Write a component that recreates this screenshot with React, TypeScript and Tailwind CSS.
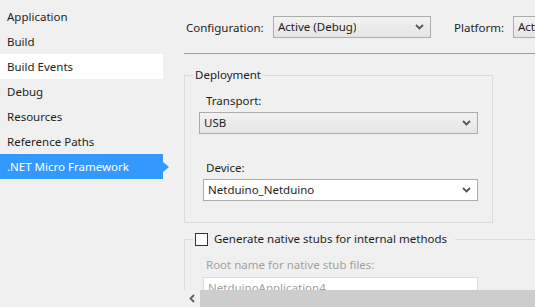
const Chevron = () => {
  return (
    <svg width="9" height="6" viewBox="0 0 9 6" className="shrink-0">
      <path d="M1 1l3.5 3.5L8 1" fill="none" stroke="#555" strokeWidth="1.8" />
    </svg>
  );
};

function DropDown({
  value,
  className,
  white,
}: {
  value: string;
  className: string;
  white?: boolean;
}) {
  return (
    <div
      className={`flex h-[22px] items-center justify-between border border-[#acacac] pl-[4px] pr-[6px] ${white ? "bg-white" : "bg-gradient-to-b from-[#f2f2f2] to-[#e5e5e5]"} ${className}`}
    >
      <span className="truncate">{value}</span>
      <Chevron />
    </div>
  );
}

const menu = [
  "Application",
  "Build",
  "Build Events",
  "Debug",
  "Resources",
  "Reference Paths",
  ".NET Micro Framework",
];

export default function App() {
  return (
    <div
      className="flex h-[307px] w-[535px] overflow-hidden bg-[#f0f0f0] text-[11.5px] text-[#1e1e1e]"
      style={{ fontFamily: '"Noto Sans", "Segoe UI", sans-serif' }}
    >
      {/* left nav */}
      <div className="flex w-[183px] shrink-0 flex-col pt-[4px]">
        {menu.map((m) => {
          const hover = m === "Build Events";
          const active = m === ".NET Micro Framework";
          return (
            <div key={m} className="flex h-[25px] items-center">
              <div
                className={`flex h-full w-[163px] items-center pl-[7px] ${hover ? "bg-white" : ""} ${active ? "bg-[#3399ff] text-white" : ""}`}
              >
                {m}
              </div>
              {active && (
                <div className="h-0 w-0 border-y-[5px] border-l-[6px] border-y-transparent border-l-[#3399ff]" />
              )}
            </div>
          );
        })}
      </div>

      {/* main pane */}
      <div className="flex min-w-0 flex-1 flex-col">
        <div className="flex-1 overflow-hidden pl-[1px]">
          <div className="flex h-[54px] items-start border-b border-[#a0a0a0] pt-[16px] pl-[2px]">
            <span className="mt-[3px] w-[87px] shrink-0 whitespace-nowrap">Configuration:</span>
            <DropDown value="Active (Debug)" className="w-[158px] shrink-0" />
            <span className="ml-[23px] mt-[3px] w-[59px] shrink-0 whitespace-nowrap">Platform:</span>
            <DropDown value="Active (Any CPU)" className="w-[120px] shrink-0" />
          </div>

          <fieldset className="mt-[13px] h-[156px] w-[306px] border border-[#dcdcdc] px-[14px]">
            <legend className="ml-[-6px] px-[2px] leading-[16px]">Deployment</legend>
            <div className="pl-[7px] pt-[10px] leading-[16px]">Transport:</div>
            <DropDown value="USB" className="mt-[3px] w-[279px]" />
            <div className="pl-[7px] pt-[26px] leading-[16px]">Device:</div>
            <DropDown value="Netduino_Netduino" className="mt-[3px] ml-[4px] w-[275px]" white />
          </fieldset>

          <fieldset className="mt-[8px] h-[80px] w-[400px] border-t border-l border-[#dcdcdc] px-[14px]">
            <legend className="ml-[-6px] flex items-center px-[2px] pr-[8px] leading-[16px]">
              <span className="mr-[6px] h-[13px] w-[13px] border border-[#333] bg-white" />
              Generate native stubs for internal methods
            </legend>
            <div className="pl-[7px] pt-[10px] leading-[16px] text-[#a0a0a0]">
              Root name for native stub files:
            </div>
            <div className="mt-[4px] ml-[4px] h-[22px] w-[275px] border border-[#dcdcdc] bg-white pl-[4px] leading-[20px] text-[#a0a0a0]">
              NetduinoApplication4
            </div>
          </fieldset>
        </div>

        {/* horizontal scrollbar */}
        <div className="flex h-[17px] shrink-0 items-stretch bg-[#f0f0f0]">
          <div className="flex w-[17px] items-center justify-center">
            <svg width="6" height="9" viewBox="0 0 6 9">
              <path d="M5 1L1.5 4.5L5 8" fill="none" stroke="#606060" strokeWidth="1.8" />
            </svg>
          </div>
          <div className="flex-1 bg-[#cdcdcd]" />
        </div>
      </div>
    </div>
  );
}
